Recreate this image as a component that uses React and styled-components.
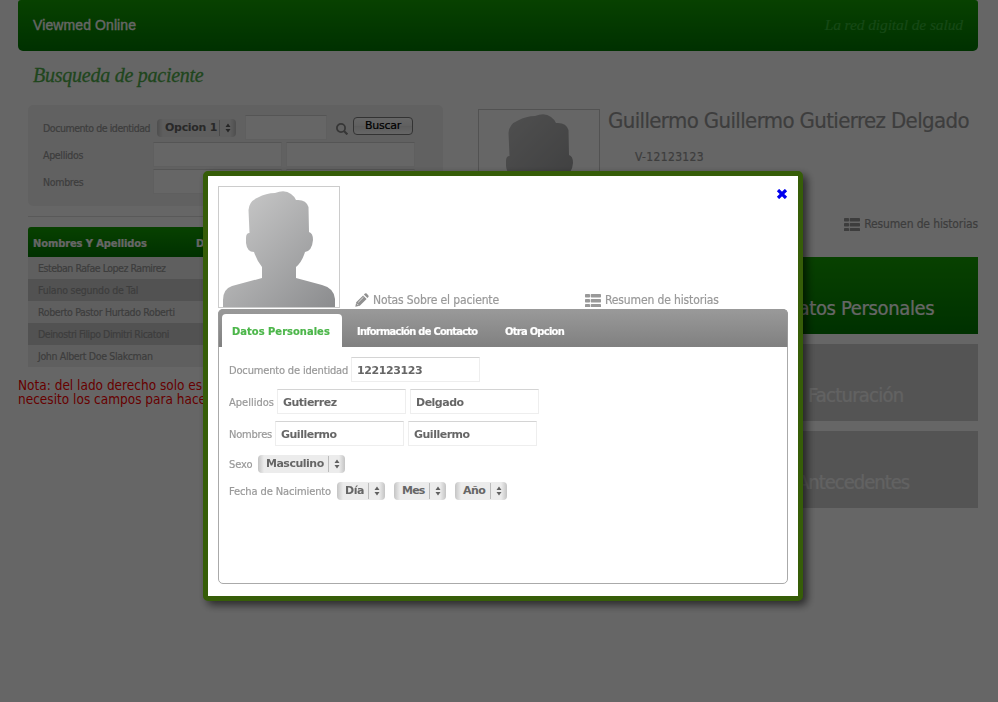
import React from "react";
import styled, { createGlobalStyle } from "styled-components";

const Global = createGlobalStyle`
  * { box-sizing: border-box; }
  html, body { margin: 0; background: #fff; }
  body {
    font-family: "DejaVu Sans Condensed", "DejaVu Sans", sans-serif;
    font-stretch: condensed;
    color: #999;
    height: 702px;
    overflow: hidden;
    -webkit-text-stroke: 0.2px currentColor;
  }
  button, input { font: inherit; }
`;

const Page = styled.div`
  width: 960px;
  margin-left: 18px;
  height: 702px;
`;
const Header = styled.header`
  height: 51px;
  padding: 0 15px 2px;
  display: flex;
  align-items: center;
  justify-content: space-between;
  border-radius: 3px 3px 5px 5px;
  background: linear-gradient(#14a300, #007a00);
`;
const Brand = styled.div`
  font: 14px/20px "Liberation Sans", Arial, sans-serif;
  letter-spacing: 0.1px;
  -webkit-text-stroke: 0.35px #fff;
  color: #fff;
`;
const Tagline = styled.div`
  font: italic 15.5px/20px "Liberation Serif", Georgia, serif;
  letter-spacing: -0.1px;
  color: #37b537;
`;
const Columns = styled.div`
  display: grid;
  grid-template-columns: 425px 500px;
  column-gap: 35px;
`;
const Title = styled.h1`
  margin: 12px 0 0 15px;
  height: 24px;
  font: italic 20px/24px "Liberation Serif", Georgia, serif;
  letter-spacing: -0.25px;
  -webkit-text-stroke: 0.3px currentColor;
  color: #4fae4a;
`;
const SearchPanel = styled.form`
  margin: 18px 0 0 10px;
  height: 101px;
  padding: 9px 15px;
  border-radius: 5px;
  background: #f3f3f3;
`;
const SearchRow = styled.div`
  display: flex;
  align-items: center;
  height: 27px;
`;
const SearchLabel = styled.label`
  width: ${(p) => p.$w}px;
  flex: none;
  font-size: 10.5px;
  letter-spacing: ${(p) => p.$ls || -0.3}px;
  white-space: nowrap;
`;
const Field = styled.input`
  width: ${(p) => p.$w || 129}px;
  height: 25px;
  margin-left: ${(p) => p.$gap || 0}px;
  padding: 2px 0 0 5px;
  border: 1px solid #eee;
  border-top-color: #d4d4d4;
  border-radius: 0;
  background: #fff;
  color: #666;
  font: bold 11px "DejaVu Sans", sans-serif;
  letter-spacing: ${(p) => p.$ls ?? -0.5}px;
  -webkit-text-stroke: 0;
  outline: none;
`;
const SelectBox = styled.span`
  display: inline-flex;
  align-items: center;
  flex: none;
  width: ${(p) => p.$w}px;
  height: 18px;
  margin-left: ${(p) => p.$gap || 0}px;
  border-radius: 4px;
  background: linear-gradient(90deg, #c4c4c4, #ececec 6px, #ececec calc(100% - 6px), #c4c4c4);
  color: #666;
  font: bold 11px/16px "DejaVu Sans", sans-serif;
  -webkit-text-stroke: 0;
  white-space: nowrap;
`;
const SelectValue = styled.span`
  flex: 1;
  padding: 1px 0 0 8px;
  letter-spacing: ${(p) => p.$ls ?? -0.5}px;
`;
const SelectArrows = styled.span`
  width: 17px;
  height: 16px;
  display: flex;
  align-items: center;
  justify-content: center;
  border-left: 1px solid #bbb;
`;
const SearchIcon = styled.svg`
  flex: none;
  margin: 2px 5px 0 9px;
`;
const SearchButton = styled.button`
  width: 60px;
  height: 18px;
  padding: 0;
  margin-top: -3px;
  border: 1px solid #808080;
  border-radius: 4px;
  background: linear-gradient(#fff, #f0f0f0 50%, #e6e6e6 51%, #fff);
  color: #000;
  font: 11px/16px "DejaVu Sans", sans-serif;
  letter-spacing: -0.3px;
`;
const Rule = styled.hr`
  margin: 10px 0 10px 10px;
  height: 1px;
  border: 0;
  background: #dedede;
`;
const Results = styled.div`
  margin-left: 10px;
`;
const ResultsHead = styled.div`
  display: flex;
  height: 30px;
  padding: 2px 0 0 5px;
  align-items: center;
  border-radius: 3px 3px 0 0;
  background: linear-gradient(#14a300, #007a00);
  color: #fff;
  font-weight: bold;
  font-size: 11px;
  letter-spacing: -0.08px;
  span:first-child { width: 163px; }
`;
const ResultRow = styled.div`
  height: 22px;
  padding-left: 10px;
  font-size: 10.5px;
  line-height: 23px;
  letter-spacing: ${(p) => p.$ls}px;
  background: #eee;
  &:nth-child(odd) { background: #cdcdcd; }
`;
const Note = styled.p`
  margin: 11px 0 0;
  color: #f00;
  font-size: 13.5px;
  line-height: 14px;
  -webkit-text-stroke: 0;
  white-space: nowrap;
`;
const PatientTop = styled.div`
  display: flex;
  height: 122px;
  margin-top: 58px;
`;
const Portrait = styled.div`
  width: 122px;
  height: 122px;
  flex: none;
  border: 1px solid #ccc;
  background: #fff;
  svg { display: block; }
`;
const PatientInfo = styled.div`
  padding-left: 8px;
  white-space: nowrap;
`;
const PatientName = styled.h2`
  margin: -2px 0 0;
  font-weight: normal;
  font-size: 22px;
  line-height: 28px;
  letter-spacing: -0.62px;
`;
const PatientId = styled.div`
  padding: 13px 0 0 27px;
  font-size: 12px;
  line-height: 18px;
  letter-spacing: 0.35px;
`;
const IconLink = styled.span`
  display: inline-flex;
  align-items: center;
  gap: 4px;
  height: 16px;
  font-size: 12px;
  letter-spacing: -0.13px;
  white-space: nowrap;
  svg { flex: none; }
`;
const HistoryLine = styled.div`
  display: flex;
  justify-content: flex-end;
  height: 33px;
  margin-top: -15px;
`;
const Menu = styled.nav`
  display: grid;
  row-gap: 10px;
  margin-top: 8px;
`;
const MenuItem = styled.div`
  height: 77px;
  padding: 36px 0 0 ${(p) => p.$left}px;
  background: ${(p) => (p.$active ? "linear-gradient(#14a300, #007a00)" : "#d2d2d2")};
  color: ${(p) => (p.$active ? "#fff" : "#f6f6f6")};
  font-size: 20px;
  line-height: 30px;
  letter-spacing: ${(p) => p.$ls}px;
`;

const Shade = styled.div`
  position: fixed;
  inset: 0;
  padding: 171px 0 0 203px;
  background: rgba(0, 0, 0, 0.6);
`;
const Dialog = styled.section`
  width: 600px;
  height: 430px;
  padding: 10px;
  border: 5px solid #365d08;
  border-radius: 5px;
  background: #fff padding-box;
  box-shadow: 4px 4px 8px rgba(0, 0, 0, 0.6);
`;
const DialogTop = styled.div`
  display: flex;
  align-items: flex-end;
  height: 122px;
  margin-bottom: 1px;
`;
const LinkCell = styled.div`
  width: ${(p) => p.$w}px;
  height: 16px;
  flex: none;
  display: flex;
`;
const Close = styled.button`
  align-self: flex-start;
  margin: 3px 0 0 auto;
  padding: 0;
  border: 0;
  background: none;
  height: 10px;
  line-height: 0;
`;
const Tabs = styled.div`
  height: 275px;
  border: 1px solid #aaa;
  border-radius: 5px;
`;
const TabBar = styled.div`
  display: flex;
  height: 38px;
  margin: -1px -1px 0;
  padding: 4px 0 0 3px;
  border: 1px solid #999;
  border-bottom: 0;
  border-radius: 5px 5px 0 0;
  background: linear-gradient(#999, #808080);
`;
const Tab = styled.div`
  height: 34px;
  padding: 0 0 0 ${(p) => p.$left}px;
  width: ${(p) => p.$w}px;
  border-radius: 4px 4px 0 0;
  background: ${(p) => (p.$active ? "#fff" : "transparent")};
  color: ${(p) => (p.$active ? "#4cb64a" : "#fff")};
  font-weight: bold;
  font-size: 11px;
  line-height: 35px;
  letter-spacing: ${(p) => p.$ls}px;
  white-space: nowrap;
`;
const Form = styled.div`
  padding: 10px 0 0 10px;
`;
const FormRow = styled.div`
  display: flex;
  align-items: center;
  height: ${(p) => p.$h}px;
`;
const FormLabel = styled.label`
  flex: none;
  width: ${(p) => p.$w}px;
  padding-top: 1px;
  font-size: 11px;
  letter-spacing: ${(p) => p.$ls}px;
  white-space: nowrap;
`;

function Avatar({ id }) {
  return (
    <Portrait>
      <svg width="120" height="120" viewBox="0 0 120 120">
        <defs>
          <linearGradient id={id} x1="0" y1="0" x2="1" y2="1">
            <stop offset="0" stopColor="#cdcdcd" />
            <stop offset="1" stopColor="#8b8c8e" />
          </linearGradient>
        </defs>
        <path
          fill={`url(#${id})`}
          d="M4 120V113Q4 102 13 99L43 91V80Q38 74 35 65Q28 65 27 56V51Q27 46 30.500 46L29.500 23Q30 14 39 10.500Q47 6 56 6Q66 2 72 7Q75 9 77 13Q87 12 89.500 20L90 45Q94 46 94 53Q93 64 86 65Q83 75 77 80V91L103 98Q115 101 116 112V120Z"
        />
      </svg>
    </Portrait>
  );
}

function ListIcon() {
  return (
    <svg width="16" height="13" viewBox="0 0 16 13" fill="#999">
      {[0, 5, 10].map((y) => (
        <g key={y}>
          <rect x="0" y={y} width="5" height="3.400" rx="0.7" />
          <rect x="5.700" y={y} width="10.300" height="3.400" rx="0.7" />
        </g>
      ))}
    </svg>
  );
}

function PencilIcon() {
  return (
    <svg width="14" height="14" viewBox="0 0 14 14">
      <path fill="#909090" d="M0.3 13.7L1.2 9.2L8.1 2.4L11.6 5.900L4.800 12.800ZM8.9 1.600L10 .6Q10.8 0 11.600.6L13.4 2.4Q14 3.200 13.4 4L12.4 5.1Z" />
      <path fill="none" stroke="#fff" strokeWidth=".7" d="M3.200 9.400L8.5 4.1M1.8 10.600L3.4 12.2" />
    </svg>
  );
}

function Select({ w, gap, ls, children }) {
  return (
    <SelectBox $w={w} $gap={gap}>
      <SelectValue $ls={ls}>{children}</SelectValue>
      <SelectArrows>
        <svg width="6" height="10" viewBox="0 0 6 10" fill="#606060">
          <path d="M3 .5L5.500 4H.5ZM3 9.500L5.500 6H.5Z" />
        </svg>
      </SelectArrows>
    </SelectBox>
  );
}

const patients = [
  ["Esteban Rafae Lopez Ramirez", -0.47],
  ["Fulano segundo de Tal", -0.22],
  ["Roberto Pastor Hurtado Roberti", -0.36],
  ["Deinostri Filipo Dimitri Ricatoni", -0.46],
  ["John Albert Doe Slakcman", -0.35],
];

export default function App() {
  return (
    <>
      <Global />
      <Page>
        <Header>
          <Brand>Viewmed Online</Brand>
          <Tagline>La red digital de salud</Tagline>
        </Header>
        <Columns>
          <div>
            <Title>Busqueda de paciente</Title>
            <SearchPanel>
              <SearchRow>
                <SearchLabel $w={114} $ls={-0.45}>Documento de identidad</SearchLabel>
                <Select w={79} ls={-0.3}>Opcion 1</Select>
                <Field $w={82} $gap={9} />
                <SearchIcon width="12" height="12" viewBox="0 0 12 12" fill="none" stroke="#888" strokeWidth="1.8">
                  <circle cx="5" cy="5" r="4.1" />
                  <path d="M8 8L11.4 11.4" strokeWidth="2.2" />
                </SearchIcon>
                <SearchButton type="button">Buscar</SearchButton>
              </SearchRow>
              <SearchRow>
                <SearchLabel $w={110}>Apellidos</SearchLabel>
                <Field />
                <Field $gap={4} />
              </SearchRow>
              <SearchRow>
                <SearchLabel $w={110}>Nombres</SearchLabel>
                <Field />
                <Field $gap={4} />
              </SearchRow>
            </SearchPanel>
            <Rule />
            <Results>
              <ResultsHead>
                <span>Nombres Y Apellidos</span>
                <span>D</span>
              </ResultsHead>
              {patients.map(([name, ls]) => (
                <ResultRow key={name} $ls={ls}>{name}</ResultRow>
              ))}
            </Results>
            <Note>
              Nota: del lado derecho solo es
              <br />
              necesito los campos para hace
            </Note>
          </div>
          <div>
            <PatientTop>
              <Avatar id="patientShade" />
              <PatientInfo>
                <PatientName>Guillermo Guillermo Gutierrez Delgado</PatientName>
                <PatientId>V-12123123</PatientId>
              </PatientInfo>
            </PatientTop>
            <HistoryLine>
              <IconLink><ListIcon />Resumen de historias</IconLink>
            </HistoryLine>
            <Menu>
              <MenuItem $active $left={307} $ls={-0.35}>Datos Personales</MenuItem>
              <MenuItem $left={330} $ls={-0.75}>Facturación</MenuItem>
              <MenuItem $left={319} $ls={-1}>Antecedentes</MenuItem>
            </Menu>
          </div>
        </Columns>
      </Page>
      <Shade>
        <Dialog>
          <DialogTop>
            <Avatar id="dialogShade" />
            <LinkCell $w={15} />
            <LinkCell $w={230}>
              <IconLink><PencilIcon />Notas Sobre el paciente</IconLink>
            </LinkCell>
            <LinkCell $w={150}>
              <IconLink><ListIcon />Resumen de historias</IconLink>
            </LinkCell>
            <Close aria-label="Cerrar">
              <svg width="12" height="10" viewBox="0 0 12 10">
                <path stroke="#00e" strokeWidth="3.2" d="M2 1L10 9M10 1L2 9" />
              </svg>
            </Close>
          </DialogTop>
          <Tabs>
            <TabBar>
              <Tab $active $w={120} $left={10} $ls={0.05}>Datos Personales</Tab>
              <Tab $w={148} $left={15} $ls={-0.74}>Información de Contacto</Tab>
              <Tab $w={90} $left={15} $ls={-0.7}>Otra Opcion</Tab>
            </TabBar>
            <Form>
              <FormRow $h={25}>
                <FormLabel $w={122} $ls={-0.16}>Documento de identidad</FormLabel>
                <Field defaultValue="122123123" $ls={-0.4} />
              </FormRow>
              <FormRow $h={39}>
                <FormLabel $w={48} $ls={0}>Apellidos</FormLabel>
                <Field defaultValue="Gutierrez" />
                <Field $gap={4} defaultValue="Delgado" />
              </FormRow>
              <FormRow $h={25}>
                <FormLabel $w={46} $ls={-0.2}>Nombres</FormLabel>
                <Field defaultValue="Guillermo" />
                <Field $gap={4} defaultValue="Guillermo" />
              </FormRow>
              <FormRow $h={35}>
                <FormLabel $w={29} $ls={-0.1}>Sexo</FormLabel>
                <Select w={87}>Masculino</Select>
              </FormRow>
              <FormRow $h={19}>
                <FormLabel $w={108} $ls={-0.1}>Fecha de Nacimiento</FormLabel>
                <Select w={48}>Día</Select>
                <Select w={52} gap={9} ls={-0.8}>Mes</Select>
                <Select w={52} gap={9}>Año</Select>
              </FormRow>
            </Form>
          </Tabs>
        </Dialog>
      </Shade>
    </>
  );
}
